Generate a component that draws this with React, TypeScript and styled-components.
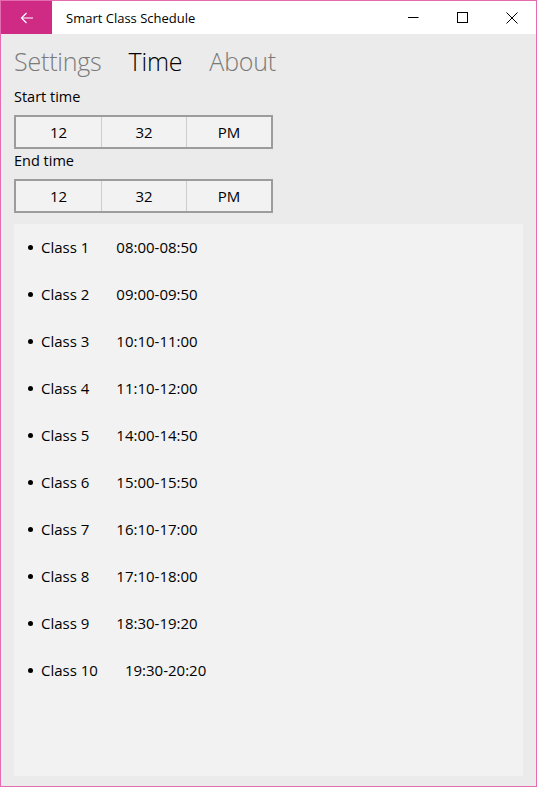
import { createGlobalStyle, styled } from "styled-components"

const GlobalStyle = createGlobalStyle`
    html, body {
        margin: 0;
        padding: 0;
        background: #ffffff;
    }
    * {
        box-sizing: border-box;
    }
`

const Window = styled.div`
    width: 537px;
    height: 787px;
    border: 1px solid #e56cb0;
    display: flex;
    flex-direction: column;
    font-family: "Segoe UI", "Open Sans", "Noto Sans", sans-serif;
    color: #000;
    background-color: #ebebeb;
`

const TitleBar = styled.div`
    height: 33px;
    display: flex;
    align-items: center;
    background-color: #ffffff;
    flex-shrink: 0;
`

const BackButton = styled.div`
    width: 51px;
    height: 100%;
    background-color: #cf2a84;
    display: flex;
    align-items: center;
    justify-content: center;
`

const Title = styled.span`
    font-size: 13px;
    margin-left: 14px;
    flex: 1;
    color: #000;
`

const Controls = styled.div`
    display: flex;
    height: 100%;
`

const ControlButton = styled.div`
    width: 49px;
    height: 100%;
    display: flex;
    align-items: center;
    justify-content: center;
`

const Content = styled.div`
    flex: 1;
    display: flex;
    flex-direction: column;
    padding: 0 13px 10px 13px;
    min-height: 0;
`

const Tabs = styled.div`
    display: flex;
    gap: 27px;
    height: 51px;
    align-items: center;
    padding-top: 3px;
    flex-shrink: 0;
`

const Tab = styled.span<{ $active?: boolean }>`
    font-size: 25px;
    font-weight: 300;
    letter-spacing: -0.2px;
    color: ${(p) => (p.$active ? "#000000" : "#7a7a7a")};
`

const Label = styled.div`
    font-size: 14.5px;
    line-height: 20px;
    height: 30px;
    padding-top: 2px;
    flex-shrink: 0;
`

const Picker = styled.div`
    width: 259px;
    height: 34px;
    border: 2px solid #9c9c9c;
    display: grid;
    grid-template-columns: 1fr 1fr 1fr;
    background-color: #f2f2f2;
    flex-shrink: 0;
`

const PickerCell = styled.div`
    display: flex;
    align-items: center;
    justify-content: center;
    font-size: 15px;
    & + & {
        border-left: 1px solid #cdcdcd;
    }
`

const Panel = styled.div`
    flex: 1;
    margin-top: 11px;
    width: 509px;
    background-color: #f2f2f2;
    padding: 11px 0 0 14px;
`

const Row = styled.div`
    display: flex;
    align-items: center;
    height: 47px;
    padding-bottom: 24px;
    font-size: 15px;
`

const Bullet = styled.span`
    width: 5px;
    height: 5px;
    border-radius: 50%;
    background-color: #000;
    margin-right: 8px;
    margin-top: 2px;
`

const ClassName = styled.span`
    margin-right: 27px;
`

const classes = [
    ["Class 1", "08:00-08:50"],
    ["Class 2", "09:00-09:50"],
    ["Class 3", "10:10-11:00"],
    ["Class 4", "11:10-12:00"],
    ["Class 5", "14:00-14:50"],
    ["Class 6", "15:00-15:50"],
    ["Class 7", "16:10-17:00"],
    ["Class 8", "17:10-18:00"],
    ["Class 9", "18:30-19:20"],
    ["Class 10", "19:30-20:20"],
]

function TimePicker() {
    return (
        <Picker>
            <PickerCell>12</PickerCell>
            <PickerCell>32</PickerCell>
            <PickerCell>PM</PickerCell>
        </Picker>
    )
}

export default function App() {
    return (
        <>
            <GlobalStyle />
            <Window>
                <TitleBar>
                    <BackButton>
                        <svg width="14" height="12" viewBox="0 0 14 12" fill="none" stroke="#fff" strokeWidth="1.2">
                            <path d="M13 6H1.5M6.5 1L1.5 6l5 5" />
                        </svg>
                    </BackButton>
                    <Title>Smart Class Schedule</Title>
                    <Controls>
                        <ControlButton>
                            <svg width="11" height="11" viewBox="0 0 11 11" stroke="#000" strokeWidth="1">
                                <path d="M0 5.5h10.5" />
                            </svg>
                        </ControlButton>
                        <ControlButton>
                            <svg width="11" height="11" viewBox="0 0 11 11" fill="none" stroke="#000" strokeWidth="1">
                                <rect x="0.5" y="0.5" width="10" height="10" />
                            </svg>
                        </ControlButton>
                        <ControlButton>
                            <svg width="12" height="12" viewBox="0 0 12 12" stroke="#000" strokeWidth="1">
                                <path d="M0.5 0.5l11 11M11.5 0.5l-11 11" />
                            </svg>
                        </ControlButton>
                    </Controls>
                </TitleBar>

                <Content>
                    <Tabs>
                        <Tab>Settings</Tab>
                        <Tab $active>Time</Tab>
                        <Tab>About</Tab>
                    </Tabs>

                    <Label>Start time</Label>
                    <TimePicker />
                    <Label>End time</Label>
                    <TimePicker />

                    <Panel>
                        {classes.map(([name, time]) => (
                            <Row key={name}>
                                <Bullet />
                                <ClassName>{name}</ClassName>
                                <span>{time}</span>
                            </Row>
                        ))}
                    </Panel>
                </Content>
            </Window>
        </>
    )
}
